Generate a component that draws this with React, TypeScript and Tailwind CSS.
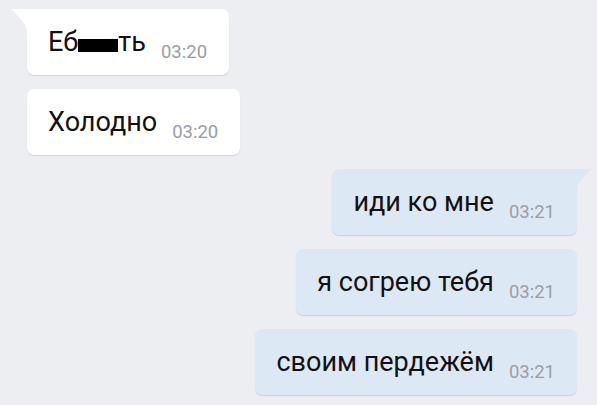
const font = { fontFamily: "Roboto, 'Noto Sans', sans-serif" };

type Msg = { text: React.ReactNode; time: string; out: boolean; tail?: boolean };

const messages: Msg[] = [
  {
    text: (
      <>
        Еб<span className="inline-block w-[40px] h-[13px] bg-black align-[-1px]" />ть
      </>
    ),
    time: "03:20",
    out: false,
    tail: true,
  },
  { text: "Холодно", time: "03:20", out: false },
  { text: "иди ко мне", time: "03:21", out: true, tail: true },
  { text: "я согрею тебя", time: "03:21", out: true },
  { text: "своим пердежём", time: "03:21", out: true },
];

function Tail({ out }: { out: boolean }) {
  if (out) {
    return (
      <svg className="absolute -right-[16px] top-0" width="18" height="28" viewBox="0 0 18 28">
        <path d="M0 0 H16 C13 4 8 9 4 14 C2 17 1 22 1 28 H0 Z" fill="#dde8f5" />
      </svg>
    );
  }
  return (
    <svg className="absolute -left-[17px] top-0" width="19" height="28" viewBox="0 0 19 28">
      <path d="M19 0 H2 C5 4 10 9 14 14 C16 17 17 22 17 28 H19 Z" fill="#ffffff" />
    </svg>
  );
}

function Bubble({ m }: { m: Msg }) {
  return (
    <div className={m.out ? "flex justify-end pr-[20px]" : "flex justify-start pl-[27px]"}>
      <div
        className={
          "relative h-[66px] flex items-baseline pt-[17px] pl-[21px] pr-[22px] rounded-[7px] shadow-[0_1px_1px_rgba(0,0,0,0.12)] " +
          (m.out ? "bg-[#dde8f5] " : "bg-white ") +
          (m.tail ? (m.out ? "rounded-tr-none" : "rounded-tl-none") : "")
        }
      >
        {m.tail && <Tail out={m.out} />}
        <span className="text-[27px] leading-[32px] text-[#111]">{m.text}</span>
        <span className="ml-[15px] text-[18.5px] text-[#9a9ea4] translate-y-[7px]">{m.time}</span>
      </div>
    </div>
  );
}

export default function App() {
  return (
    <div className="w-[597px] h-[405px] bg-[#edeef2] pt-[9px] flex flex-col gap-[14px] overflow-hidden" style={font}>
      {messages.map((m, i) => (
        <Bubble key={i} m={m} />
      ))}
    </div>
  );
}
